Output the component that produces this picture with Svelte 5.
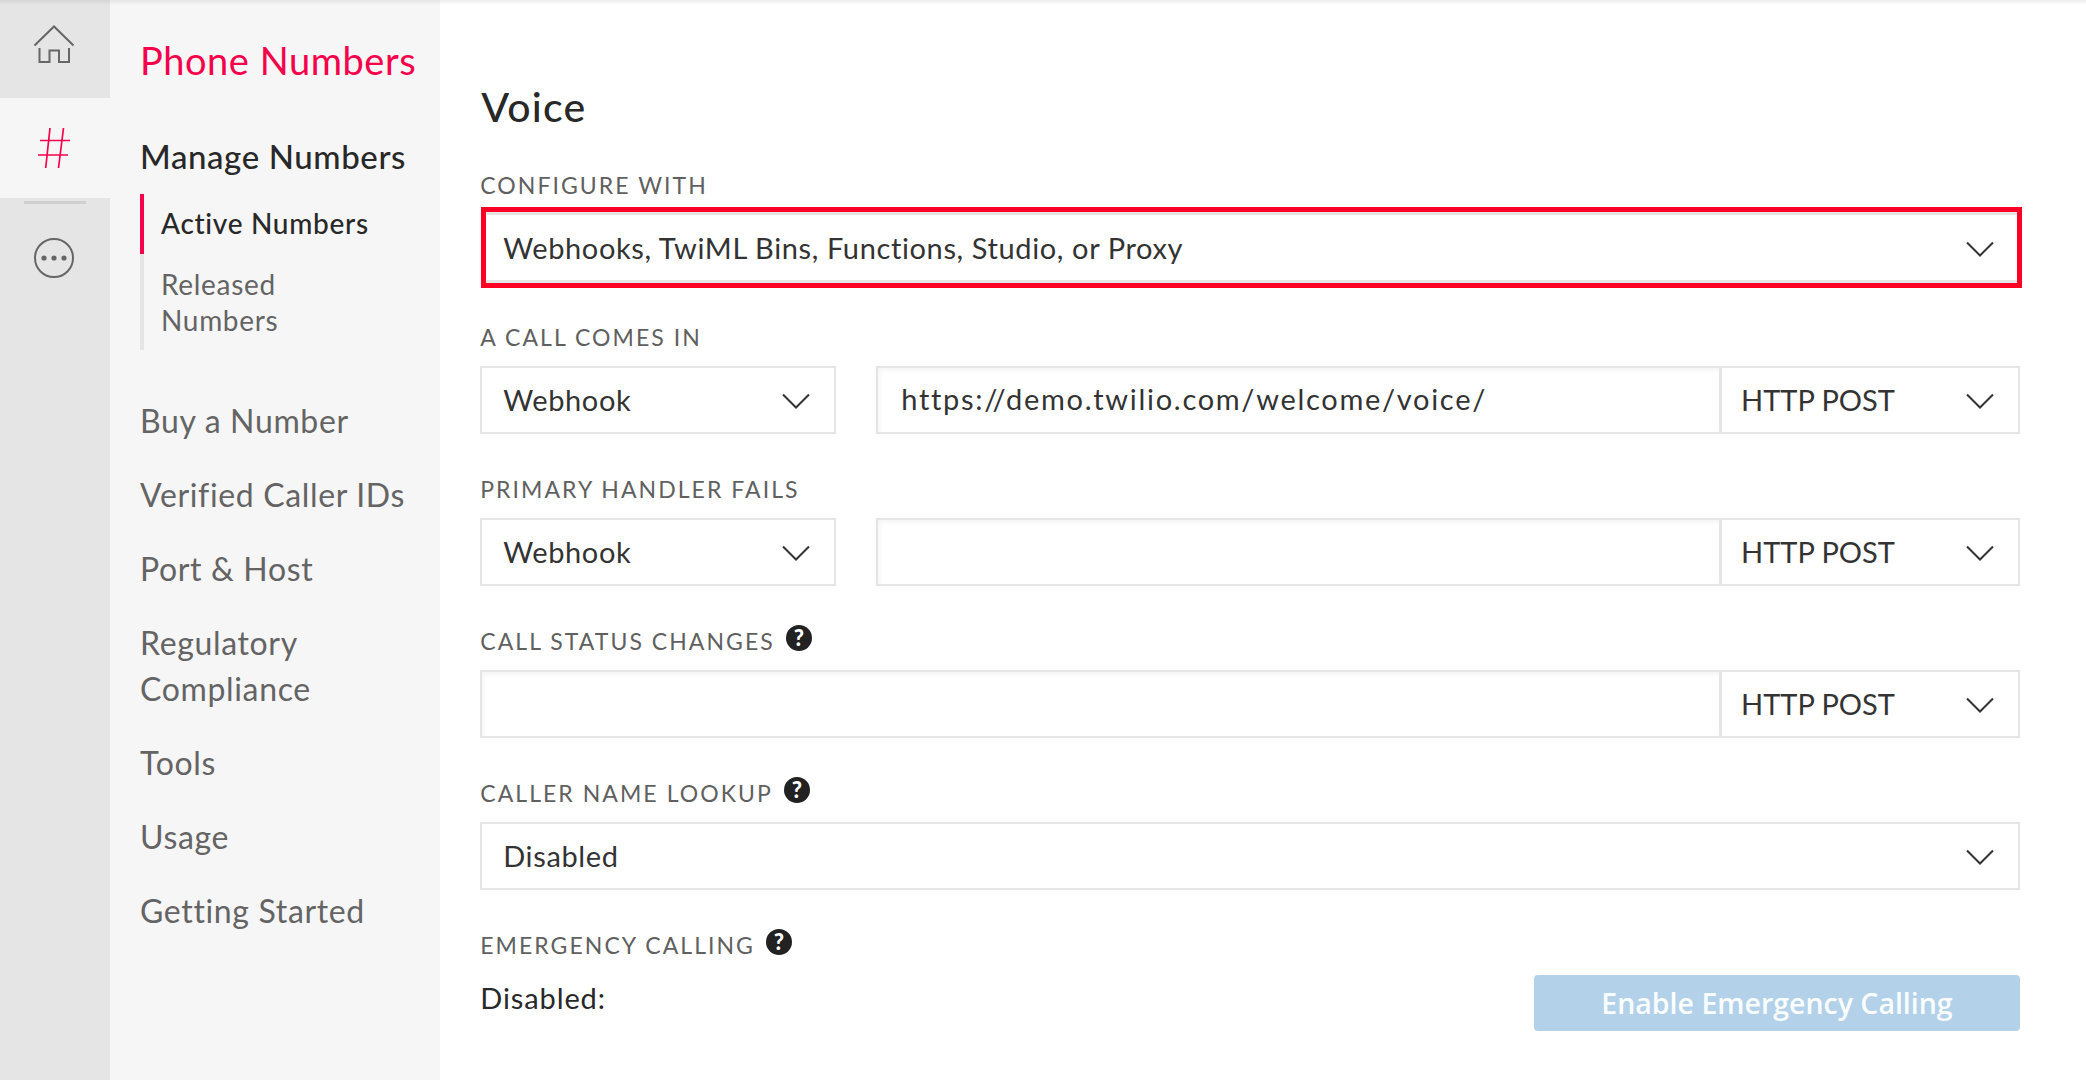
<script lang="ts">
	const navItems = ['Buy a Number', 'Verified Caller IDs', 'Port & Host', 'Regulatory Compliance', 'Tools', 'Usage', 'Getting Started'];
</script>

{#snippet chevron()}
	<svg class="chevron" width="28" height="16" viewBox="0 0 28 16" aria-hidden="true">
		<path d="M1 1.5 14 14.5 27 1.5" fill="none" stroke="#333" stroke-width="2" />
	</svg>
{/snippet}

{#snippet select(text: string, cls: string)}
	<div class="select {cls}">
		<span>{text}</span>
		{@render chevron()}
	</div>
{/snippet}

{#snippet label(text: string, help = false)}
	<div class="label">
		<span>{text}</span>
		{#if help}<span class="help">?</span>{/if}
	</div>
{/snippet}

<div class="page">
	<aside class="rail">
		<div class="tile home">
			<svg width="110" height="98" viewBox="0 0 110 98" aria-hidden="true">
				<path d="M34.5 45.5 54 26.5 73.5 45.5M39.5 48V62H49.5V50.5H59V62H69V48" fill="none" stroke="#666" stroke-width="2" />
			</svg>
		</div>
		<div class="tile active">
			<svg width="110" height="100" viewBox="0 0 110 100" aria-hidden="true">
				<path d="M50 30 45.7 70M63.5 30 58.5 70M40 42.5H70M38 57H68" fill="none" stroke="#f5004b" stroke-width="1.7" />
			</svg>
		</div>
		<div class="divider"></div>
		<div class="tile more">
			<svg width="110" height="80" viewBox="0 0 110 80" aria-hidden="true">
				<circle cx="54" cy="54" r="19" fill="none" stroke="#666" stroke-width="2" />
				<circle cx="44" cy="54" r="2.6" fill="#666" />
				<circle cx="54" cy="54" r="2.6" fill="#666" />
				<circle cx="64" cy="54" r="2.6" fill="#666" />
			</svg>
		</div>
	</aside>

	<nav class="nav">
		<div class="product">Phone Numbers</div>
		<div class="section">Manage Numbers</div>
		<ul class="sub">
			<li class="current">Active Numbers</li>
			<li class="released">Released Numbers</li>
		</ul>
		<ul class="items">
			{#each navItems as item}
				<li>{item}</li>
			{/each}
		</ul>
	</nav>

	<main class="main">
		<h1>Voice</h1>

		<section class="field first">
			{@render label('Configure with')}
			{@render select('Webhooks, TwiML Bins, Functions, Studio, or Proxy', 'highlight')}
		</section>

		<section class="field">
			{@render label('A call comes in')}
			<div class="row">
				{@render select('Webhook', 'kind')}
				<div class="input">https://demo.twilio.com/welcome/voice/</div>
				{@render select('HTTP POST', 'method')}
			</div>
		</section>

		<section class="field">
			{@render label('Primary handler fails')}
			<div class="row">
				{@render select('Webhook', 'kind')}
				<div class="input"></div>
				{@render select('HTTP POST', 'method')}
			</div>
		</section>

		<section class="field">
			{@render label('Call status changes', true)}
			<div class="row">
				<div class="input wide"></div>
				{@render select('HTTP POST', 'method')}
			</div>
		</section>

		<section class="field">
			{@render label('Caller name lookup', true)}
			{@render select('Disabled', 'full')}
		</section>

		<section class="field">
			{@render label('Emergency calling', true)}
			<div class="emergency">
				<span>Disabled:</span>
				<button type="button" disabled>Enable Emergency Calling</button>
			</div>
		</section>
	</main>
</div>

<style>
	:global(body) {
		margin: 0;
		background: #fff;
	}

	.page {
		position: relative;
		display: flex;
		width: 2086px;
		height: 1080px;
		overflow: hidden;
		font-family: Lato, 'Liberation Sans', sans-serif;
		color: #282828;
	}

	/* faint shadow from the console header above the crop */
	.page::before {
		content: '';
		position: absolute;
		inset: 0 0 auto;
		height: 5px;
		background: linear-gradient(rgba(0, 0, 0, 0.07), rgba(0, 0, 0, 0));
	}

	.rail {
		flex: 0 0 110px;
		display: flex;
		flex-direction: column;
		background: #e5e5e5;
	}

	.tile svg {
		display: block;
	}

	.tile.active {
		background: #f6f6f6;
	}

	.divider {
		height: 3px;
		margin: 3px 24px 0;
		background: #cfcfcf;
	}

	.more {
		height: 80px;
	}

	.more svg {
		overflow: visible;
	}

	.nav {
		flex: 0 0 330px;
		box-sizing: border-box;
		padding: 35px 24px 0 30px;
		background: #f6f6f6;
	}

	.product {
		font-size: 38px;
		line-height: 50px;
		letter-spacing: 0.55px;
		color: #f5004b;
		white-space: nowrap;
	}

	.section {
		margin-top: 51px;
		margin-bottom: 18px;
		font-size: 33px;
		font-weight: 500;
		line-height: 40px;
		letter-spacing: 0.6px;
		white-space: nowrap;
	}

	ul {
		list-style: none;
		margin: 0;
		padding: 0;
	}

	.sub {
		font-size: 28px;
		line-height: 36px;
		letter-spacing: 0.7px;
		border-left: 4px solid #e5e5e5;
	}

	.sub li {
		margin-left: -4px;
		padding-left: 17px;
		border-left: 4px solid transparent;
		color: #646464;
	}

	.sub .current {
		padding-top: 11px;
		padding-bottom: 13px;
		font-weight: 500;
		border-left-color: #f5004b;
		color: #282828;
	}

	.sub .released {
		max-width: 190px;
		padding-top: 12px;
		padding-bottom: 12px;
	}

	.items {
		display: flex;
		flex-direction: column;
		gap: 28px;
		margin-top: 48px;
		font-size: 32px;
		line-height: 46px;
		letter-spacing: 0.65px;
		color: #646464;
	}

	.main {
		flex: 1;
		box-sizing: border-box;
		padding: 80px 66px 0 40px;
		min-width: 0;
	}

	h1 {
		margin: 0 0 36px 1px;
		font-size: 41px;
		font-weight: 500;
		line-height: 54px;
		letter-spacing: 1.2px;
	}

	.field {
		margin-bottom: 39px;
	}

	.field.first {
		margin-bottom: 33px;
	}

	.label {
		box-sizing: border-box;
		display: flex;
		align-items: center;
		gap: 11px;
		height: 30px;
		margin: 0 0 15px 0;
		padding-top: 2px;
		font-size: 23px;
		line-height: 30px;
		letter-spacing: 2.05px;
		text-transform: uppercase;
		color: #606060;
	}

	.first .label {
		margin: 0 0 7px;
		padding-top: 0;
	}

	.help {
		flex: none;
		width: 26px;
		height: 26px;
		margin-bottom: 7px;
		border-radius: 50%;
		background: #222;
		color: #fff;
		font-size: 22px;
		font-weight: 900;
		line-height: 26px;
		letter-spacing: 0;
		text-align: center;
	}

	.row {
		display: flex;
	}

	.select {
		box-sizing: border-box;
		display: flex;
		align-items: center;
		justify-content: space-between;
		height: 68px;
		padding: 0 24px 2px 21px;
		border: 2px solid #e5e5e5;
		color: #333;
		font-size: 29px;
		letter-spacing: 0.62px;
		background: #fff;
	}

	.chevron {
		margin-top: 4px;
	}

	.select.highlight {
		height: 81px;
		margin-left: 1px;
		margin-right: -2px;
		padding: 0 23px 0 17px;
		border: 5px solid #fe0026;
		box-shadow: inset 0 3px #e5e5e5, inset 0 -3px #e5e5e5;
	}

	.highlight .chevron {
		margin-top: 2px;
	}

	.select.kind {
		flex: 0 0 356px;
		margin-right: 40px;
	}

	.select.method {
		flex: 0 0 299px;
		padding-left: 19px;
		letter-spacing: 0;
	}

	.input {
		box-sizing: border-box;
		flex: 1;
		height: 68px;
		padding: 0 23px;
		border: 2px solid #e5e5e5;
		color: #333;
		font-size: 29px;
		line-height: 62px;
		letter-spacing: 1.7px;
		box-shadow: inset 2px 3px 4px rgba(0, 0, 0, 0.04);
	}

	.input + .select {
		border-left-width: 1px;
	}

	.emergency {
		display: flex;
		align-items: flex-start;
		justify-content: space-between;
		font-size: 29px;
		line-height: 48px;
		letter-spacing: 0.9px;
	}

	button {
		width: 486px;
		height: 56px;
		margin-top: 1px;
		border: 0;
		border-radius: 4px;
		background: #b3d1e8;
		color: #fafdff;
		font-family: 'Open Sans', sans-serif;
		font-size: 28.5px;
		font-weight: 600;
	}
</style>
